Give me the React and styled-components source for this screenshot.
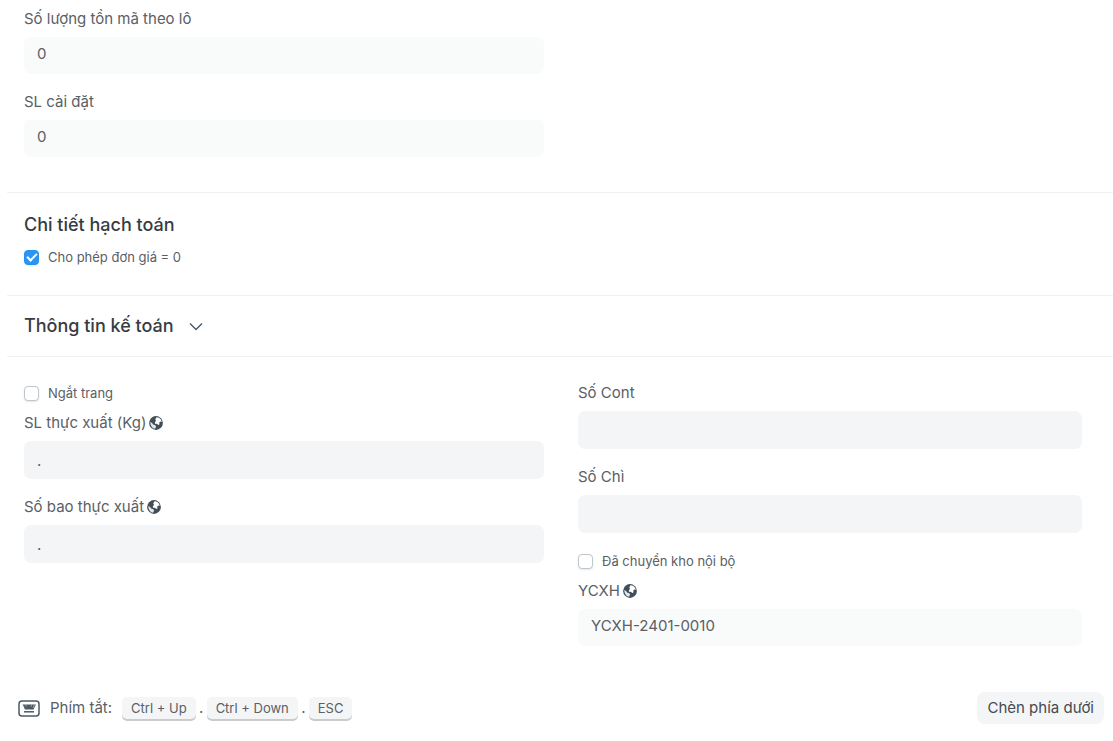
import React, { useState } from 'react'
import styled, { createGlobalStyle } from 'styled-components'

const GlobalStyle = createGlobalStyle`
  * {
    box-sizing: border-box;
  }
  body {
    margin: 0;
    background-color: #fff;
    color: #5a6065;
    font-family: Inter, 'Noto Sans', sans-serif;
    font-size: 15px;
    line-height: 20px;
  }
  input, button {
    font: inherit;
    color: inherit;
  }
`

const Form = styled.form`
  padding-left: 7px;
`

const Section = styled.section`
  padding: ${p => p.$padding};
  border-bottom: ${p => (p.$last ? 'none' : '1px solid #f1f2f3')};
`

const Columns = styled.div`
  display: grid;
  grid-template-columns: 520fr 504fr;
  column-gap: 34px;
  padding-right: 14px;
`

const Column = styled.div`
  min-width: 0;
`

const FieldWrap = styled.div`
  margin-bottom: 18px;
`

const FieldLabel = styled.label`
  display: flex;
  align-items: center;
  gap: 3px;
  margin-bottom: 8px;
`

const TextInput = styled.input`
  display: block;
  width: 100%;
  height: 38px;
  padding: 0 13px;
  border: 0;
  border-radius: 7px;
  outline: none;
  background-color: #f4f5f6;
  &:read-only {
    height: 37px;
    padding-bottom: 4px;
    background-color: #f9fafa;
  }
  &:focus-visible {
    box-shadow: 0 0 0 2px #d5dade;
  }
`

const CheckLabel = styled.label`
  display: flex;
  align-items: center;
  gap: 9px;
  margin-bottom: 10px;
  font-size: 13px;
`

const Checkbox = styled.input`
  appearance: none;
  display: grid;
  place-items: center;
  width: 15px;
  height: 15px;
  margin: 0;
  border: 1px solid #bfc6cc;
  border-radius: 4px;
  background-color: #fff;
  box-shadow: 0 1px 2px rgba(0, 0, 0, 0.1);
  &:checked {
    border-color: #2490ef;
    background-color: #2d95f0;
  }
  &:checked::after {
    content: '';
    width: 8px;
    height: 4px;
    border-left: 2px solid #fff;
    border-bottom: 2px solid #fff;
    transform: translateY(-1px) rotate(-45deg);
  }
`

const Heading = styled.h2`
  margin: 0;
  color: #363c42;
  font-size: 18px;
  font-weight: 500;
  line-height: 24px;
`

const SectionTitle = styled(Heading)`
  margin-bottom: 10px;
`

const Toggle = styled.button`
  display: flex;
  align-items: center;
  gap: 15px;
  padding: 0;
  border: 0;
  background: none;
  cursor: pointer;
`

const Footer = styled.footer`
  display: flex;
  align-items: center;
  justify-content: space-between;
  padding: 0 9px 16px 11px;
`

const Shortcuts = styled.div`
  display: flex;
  align-items: center;
`

const ShortcutTitle = styled.span`
  margin: 0 10px;
`

const Key = styled.kbd`
  padding: 1px 9px;
  border-radius: 5px;
  background-color: #f4f5f6;
  box-shadow: 0 2px 0 #c9cccf;
  font-family: inherit;
  font-size: 13px;
`

const Dot = styled.span`
  width: 11px;
  text-align: center;
`

const InsertButton = styled.button`
  height: 32px;
  padding: 0 10px;
  border: 0;
  border-radius: 8px;
  background-color: #f4f5f6;
  color: #454b50;
  cursor: pointer;
`

const KeyboardIcon = () => (
  <svg width="22" height="17" viewBox="0 0 22 17" fill="none" aria-hidden="true">
    <rect x="1" y="1" width="20" height="15" rx="3" stroke="#4c5a67" strokeWidth="1.5" />
    <path d="M4.5 4.5h13.5l-1.2 2.2-1.2 2.8H6.8L6 7z" fill="#4c5a67" />
    <path d="M8 4.5v2M13 6.5l1-2M15 8l1.5-3" stroke="#b4bbc1" strokeWidth="0.8" />
    <path d="M6 11.8h10" stroke="#4c5a67" strokeWidth="1.5" />
  </svg>
)

const Globe = () => (
  <svg width="14" height="14" viewBox="0 0 13 13" aria-hidden="true">
    <circle cx="6.5" cy="6.5" r="6.4" fill="#414d57" />
    <path d="M6.8 1.2l2.6.5 1.8 1.7.6 2.1-1.3-.4-1 .9.3 1.7-1.2.7-1.3-1.1-1.4.1-.5-1.5 1.2-1.4-.8-1.1z" fill="#fff" />
    <path d="M1.2 5.6l1.7.9.9 1.5 2.1.5.7 1.4-1 1.9-1.7-.5-1.6-1.6-.9-2z" fill="#fff" fillOpacity="0.85" />
  </svg>
)

const Chevron = () => (
  <svg width="14" height="9" viewBox="0 0 14 9" fill="none" aria-hidden="true">
    <path d="M1 1.5l6 6 6-6" stroke="#4c5a67" strokeWidth="1.4" />
  </svg>
)

const Field = ({ id, label, value = '', readOnly, translatable }) => (
  <FieldWrap>
    <FieldLabel htmlFor={id}>
      {label}
      {translatable && <Globe />}
    </FieldLabel>
    <TextInput id={id} type="text" defaultValue={value} readOnly={readOnly} />
  </FieldWrap>
)

const Check = ({ label, checked = false }) => (
  <CheckLabel>
    <Checkbox type="checkbox" defaultChecked={checked} />
    {label}
  </CheckLabel>
)

const App = () => {
  const [open, setOpen] = useState(false)

  return (
    <>
      <GlobalStyle />
      <Form onSubmit={e => e.preventDefault()}>
        <Section $padding="9px 17px 17px">
          <Columns>
            <Column>
              <Field id="batch_qty" label="Số lượng tồn mã theo lô" value="0" readOnly />
              <Field id="set_qty" label="SL cài đặt" value="0" readOnly />
            </Column>
          </Columns>
        </Section>
        <Section $padding="20px 17px 18px">
          <SectionTitle>Chi tiết hạch toán</SectionTitle>
          <Columns>
            <Column>
              <Check label="Cho phép đơn giá = 0" checked />
            </Column>
          </Columns>
        </Section>
        <Section $padding="18px 17px">
          <Heading>
            <Toggle type="button" aria-expanded={open} onClick={() => setOpen(!open)}>
              Thông tin kế toán
              <Chevron />
            </Toggle>
          </Heading>
        </Section>
        <Section $padding="26px 17px 28px" $last>
          <Columns>
            <Column>
              <Check label="Ngắt trang" />
              <Field id="actual_kg" label="SL thực xuất (Kg)" value="." translatable />
              <Field id="actual_bags" label="Số bao thực xuất" value="." translatable />
            </Column>
            <Column>
              <Field id="cont_no" label="Số Cont" />
              <Field id="seal_no" label="Số Chì" />
              <Check label="Đã chuyển kho nội bộ" />
              <Field id="ycxh" label="YCXH" value="YCXH-2401-0010" readOnly translatable />
            </Column>
          </Columns>
        </Section>
        <Footer>
          <Shortcuts>
            <KeyboardIcon />
            <ShortcutTitle>Phím tắt:</ShortcutTitle>
            <Key>Ctrl + Up</Key>
            <Dot>.</Dot>
            <Key>Ctrl + Down</Key>
            <Dot>.</Dot>
            <Key>ESC</Key>
          </Shortcuts>
          <InsertButton type="button">Chèn phía dưới</InsertButton>
        </Footer>
      </Form>
    </>
  )
}

export default App
